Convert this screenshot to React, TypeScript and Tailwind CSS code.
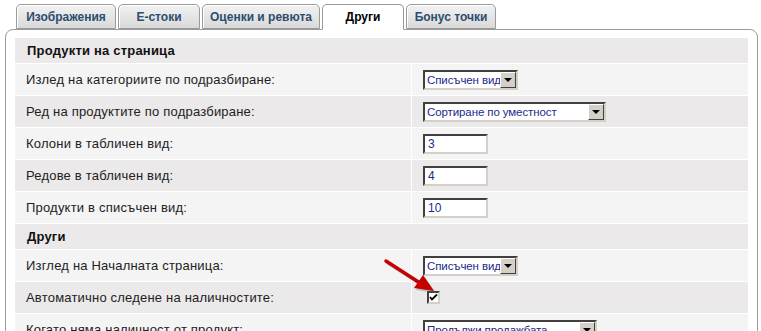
import React from 'react';

const tabs = ['Изображения', 'Е-стоки', 'Оценки и ревюта', 'Други', 'Бонус точки'];
const tabWidths = ['w-[100px]', 'w-[82px]', 'w-[118px]', 'w-[82px]', 'w-[90px]'];

function Select({ value, width }: { value: string; width: string }) {
  return (
    <div
      className={`flex h-[20px] ${width} items-stretch border-2 border-t-[#404040] border-l-[#404040] border-r-[#d4d0c8] border-b-[#d4d0c8] bg-white`}
    >
      <span className="flex-1 overflow-hidden whitespace-nowrap pl-[2px] text-[11.5px] leading-[16px] tracking-[-0.1px] text-[#1a2a8c]">
        {value}
      </span>
      <span className="flex w-[16px] shrink-0 items-center justify-center border border-t-white border-l-white border-r-[#404040] border-b-[#404040] bg-[#d4d0c8]">
        <span className="h-0 w-0 border-x-[4px] border-t-[4px] border-x-transparent border-t-black" />
      </span>
    </div>
  );
}

function TextInput({ value }: { value: string }) {
  return (
    <div className="h-[20px] w-[65px] border-2 border-t-[#404040] border-l-[#404040] border-r-[#d4d0c8] border-b-[#d4d0c8] bg-white pl-[3px] text-[12px] leading-[16px] text-[#1a2a8c]">
      {value}
    </div>
  );
}

function Checkbox() {
  return (
    <div className="ml-[4px] flex h-[13px] w-[13px] items-center justify-center border-2 border-t-[#404040] border-l-[#404040] border-r-[#d4d0c8] border-b-[#d4d0c8] bg-white">
      <svg width="9" height="9" viewBox="0 0 9 9">
        <path d="M1 4 L3 6.5 L8 1.5" stroke="#000" strokeWidth="1.8" fill="none" />
      </svg>
    </div>
  );
}

type Row =
  | { kind: 'head'; label: string }
  | { kind: 'row'; label: string; control: React.ReactNode };

const rows: Row[] = [
  { kind: 'head', label: 'Продукти на страница' },
  { kind: 'row', label: 'Излед на категориите по подразбиране:', control: <Select value="Списъчен вид" width="w-[95px]" /> },
  { kind: 'row', label: 'Ред на продуктите по подразбиране:', control: <Select value="Сортиране по уместност" width="w-[183px]" /> },
  { kind: 'row', label: 'Колони в табличен вид:', control: <TextInput value="3" /> },
  { kind: 'row', label: 'Редове в табличен вид:', control: <TextInput value="4" /> },
  { kind: 'row', label: 'Продукти в списъчен вид:', control: <TextInput value="10" /> },
  { kind: 'head', label: 'Други' },
  { kind: 'row', label: 'Изглед на Началната страница:', control: <Select value="Списъчен вид" width="w-[95px]" /> },
  { kind: 'row', label: 'Автоматично следене на наличностите:', control: <Checkbox /> },
  { kind: 'row', label: 'Когато няма наличност от продукт:', control: <Select value="Продължи продажбата" width="w-[174px]" /> },
];

export default function App() {
  let dark = true;
  return (
    <div className="relative h-[331px] w-[761px] overflow-hidden bg-white font-['Liberation_Sans',Arial,sans-serif]">
      {/* табове */}
      <div className="flex gap-[2px] pl-[16px] pt-[4px]">
        {tabs.map((t, i) => {
          const active = t === 'Други';
          return (
            <div
              key={t}
              className={`relative z-10 flex h-[25px] ${tabWidths[i]} items-center justify-center rounded-t-[5px] border border-[#9a9a9a] text-[12px] font-bold shadow-[inset_1px_1px_0_#fff] ${
                active
                  ? '-mb-px h-[26px] border-b-white bg-white text-black'
                  : 'bg-gradient-to-b from-[#f2f2f2] to-[#d9d9d9] text-[#2c4d70]'
              }`}
            >
              {t}
            </div>
          );
        })}
      </div>

      {/* панел */}
      <div className="ml-[5px] h-[400px] w-[753px] rounded-t-[8px] border border-[#9a9a9a] px-[9px] pt-[8px]">
        <div className="grid grid-cols-[396px_1fr] gap-px bg-white">
          {rows.map((r, i) => {
            if (r.kind === 'head') {
              dark = false;
              return (
                <div
                  key={i}
                  className="col-span-2 flex h-[25px] items-center bg-[#ebe9e9] pl-[12px] text-[13px] font-bold tracking-[0.2px] text-[#111]"
                >
                  {r.label}
                </div>
              );
            }
            const bg = dark ? 'bg-[#ebe9e9]' : 'bg-[#f4f4f4]';
            dark = !dark;
            return (
              <React.Fragment key={i}>
                <div className={`flex h-[31px] items-center pl-[11px] text-[13px] tracking-[0.2px] text-[#222] ${bg}`}>
                  {r.label}
                </div>
                <div className={`flex h-[31px] items-center pl-[11px] ${bg}`}>{r.control}</div>
              </React.Fragment>
            );
          })}
        </div>
      </div>

      {/* червена стрелка */}
      <svg className="absolute left-[378px] top-[254px]" width="64" height="44" viewBox="0 0 64 44">
        <g transform="translate(2,2)" opacity="0.3">
          <line x1="8" y1="7" x2="42" y2="29" stroke="#555" strokeWidth="3.5" strokeLinecap="round" />
          <polygon points="56,37 36,34 45,21" fill="#555" />
        </g>
        <line x1="8" y1="7" x2="42" y2="29" stroke="#c40000" strokeWidth="3.5" strokeLinecap="round" />
        <polygon points="56,37 36,34 45,21" fill="#c40000" />
      </svg>
    </div>
  );
}
